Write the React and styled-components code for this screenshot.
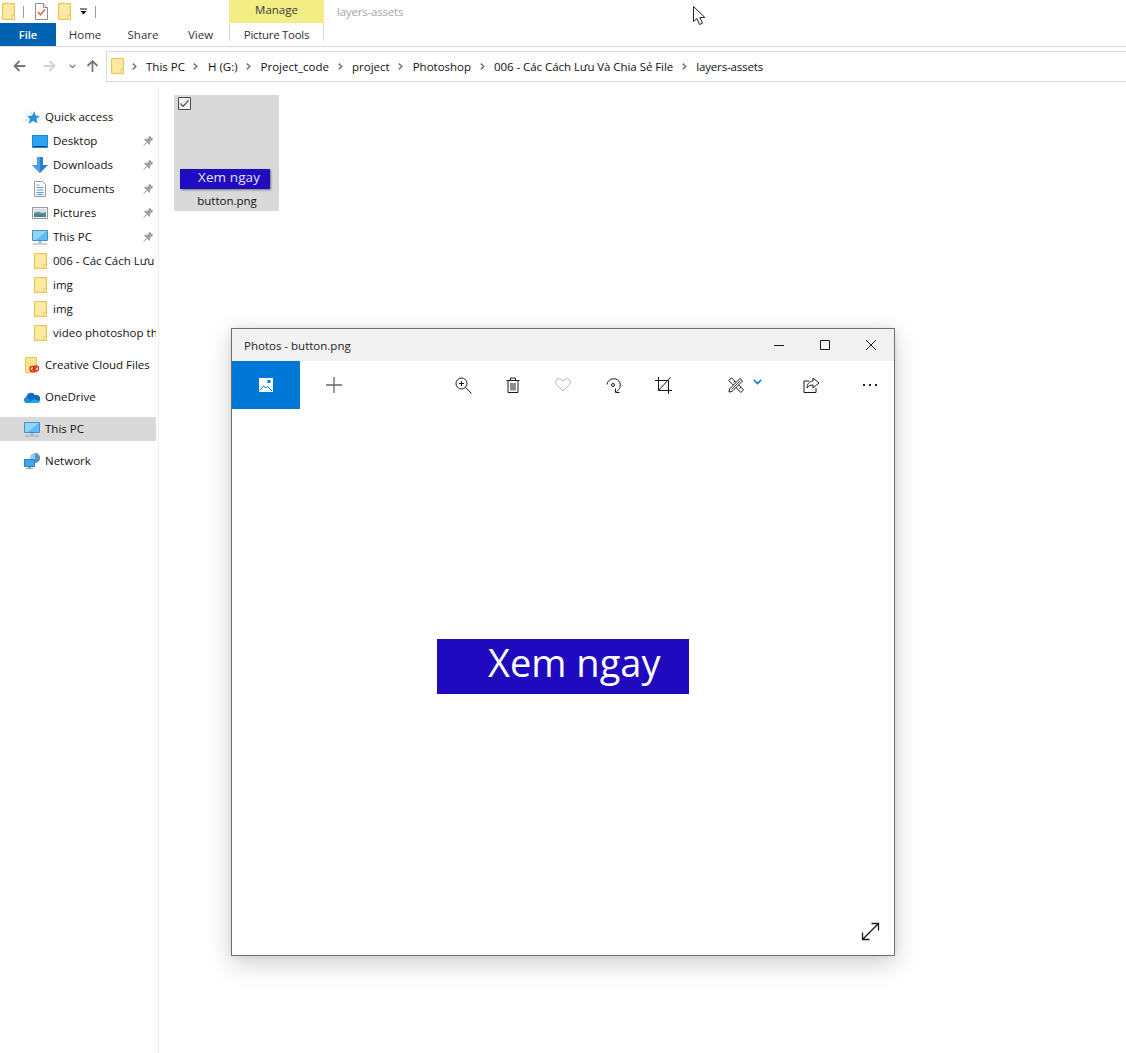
import React from "react";
import styled, { createGlobalStyle } from "styled-components";

const Global = createGlobalStyle`
  html, body { margin: 0; padding: 0; background: #fff; }
  body { font-family: "Open Sans", "Noto Sans", "Liberation Sans", sans-serif; font-size: 11.5px; color: #111; }
  svg { display: block; flex: none; }
`;

const Page = styled.div`
  position: relative; width: 1126px; height: 1053px; overflow: hidden; background: #fff;
  display: flex; flex-direction: column;
`;
const TitleRow = styled.div`display: flex; align-items: flex-start; height: 23px;`;
const Quick = styled.div`display: flex; align-items: center; width: 229px; height: 23px; padding-left: 2px; box-sizing: border-box;`;
const QuickSlot = styled.div`margin-left: ${p => p.$ml || 0}px;`;
const QuickSep = styled.div`width: 1px; height: 12px; background: #9a9a9a; margin-left: ${p => p.$ml}px;`;
const ManageTab = styled.div`
  width: 95px; height: 23px; background: #f2ee85; color: #3a3a3a; text-align: center; line-height: 20px;
`;
const WindowName = styled.div`margin-left: 13px; line-height: 24px; color: #a6a6a6; letter-spacing: -0.2px;`;
const TabRow = styled.div`display: flex; height: 23px; border-bottom: 1px solid #dadada;`;
const FileTab = styled.div`width: 56px; background: #0063b1; color: #fff; text-align: center; line-height: 23px; font-weight: 600; font-size: 11px;`;
const Tab = styled.div`width: ${p => p.$w}px; text-align: center; line-height: 23px; color: #333;`;
const ToolsTab = styled.div`
  width: 95px; height: 18px; box-sizing: border-box; border: 1px solid #d9d9d9; border-width: 0 1px; line-height: 23px;
  text-align: center; color: #333; white-space: nowrap; letter-spacing: -0.3px;
`;
const AddressRow = styled.div`display: flex; align-items: center; height: 38px;`;
const NavButtons = styled.div`display: flex; align-items: center; width: 106px; flex: none;`;
const NavSlot = styled.div`margin-left: ${p => p.$ml}px;`;
const AddressBox = styled.div`
  flex: 1; height: 31px; margin-right: -3px; box-sizing: border-box; border: 1px solid #d9d9d9; display: flex; align-items: center; padding-left: 4px;
`;
const Crumbs = styled.div`display: flex; align-items: center; white-space: nowrap;`;
const Crumb = styled.span`letter-spacing: ${p => p.$track || 0}px;`;
const CrumbSep = styled.div`width: ${p => p.$w || 23}px; display: flex; justify-content: center; padding-right: 1px; box-sizing: border-box;`;
const Body = styled.div`flex: 1; display: flex; min-height: 0;`;
const Nav = styled.nav`
  width: 159px; box-sizing: border-box; border-right: 1px solid #f0f0f0; padding: 20px 2px 0 0; flex: none;
`;
const NavGroup = styled.div`margin-bottom: 8px;`;
const NavRow = styled.div`
  display: flex; align-items: center; height: 24px; position: relative; overflow: hidden; white-space: nowrap;
  background: ${p => p.$selected ? "#d9d9d9" : "transparent"};
`;
const NavIcon = styled.div`
  width: 16px; margin-left: ${p => p.$sub ? 32 : 24}px; margin-right: 5px; display: flex; justify-content: center; flex: none;
`;
const NavLabel = styled.span`padding-bottom: 2px;`;
const Pin = styled.div`position: absolute; right: 2px; top: 6px;`;
const Content = styled.main`flex: 1; padding: 10px 0 0 15px;`;
const Tile = styled.div`position: relative; width: 105px; height: 116px; background: #d9d9d9; padding: 74px 0 0 6px; box-sizing: border-box;`;
const Check = styled.div`position: absolute; left: 4px; top: 2px;`;
const Thumb = styled.div`
  width: 90px; height: 20px; background: #1f0cc0; color: #e4e2ff; box-sizing: border-box; padding-left: 18px;
  font-size: 13.5px; line-height: 16px; box-shadow: 1px 1px 2px rgba(0,0,0,.45); letter-spacing: 0.1px;
`;
const TileLabel = styled.div`margin: 3px 0 0 -6px; text-align: center; line-height: 18px; padding-left: 1px; color: #111;`;

const Win = styled.section`
  position: absolute; left: 231px; top: 328px; width: 664px; height: 628px; box-sizing: border-box;
  border: 1px solid #6e6e6e; background: #fff; display: flex; flex-direction: column;
  box-shadow: 0 8px 24px rgba(0,0,0,.18), 0 0 8px rgba(0,0,0,.08);
`;
const WinTitle = styled.header`height: 32px; background: #f2f2f2; display: flex; align-items: center; padding-left: 12px; color: #222;`;
const WinName = styled.div`flex: 1;`;
const WinCtl = styled.div`width: 46px; height: 32px; display: flex; align-items: center; justify-content: center;`;
const Toolbar = styled.div`height: 48px; display: flex; align-items: center;`;
const Primary = styled.div`width: 68px; height: 48px; background: #0078d7; display: flex; align-items: center; justify-content: center;`;
const ToolBtn = styled.div`
  width: ${p => p.$w || 50}px; height: 48px; margin-left: ${p => p.$ml || 0}px; display: flex; align-items: center; justify-content: center;
`;
const EditBtn = styled.div`
  width: 74px; height: 48px; margin-left: 24px; display: flex; align-items: center; padding-left: 16px; box-sizing: border-box; gap: 9px;
`;
const Chevron = styled.div`margin-top: -6px;`;
const Canvas = styled.div`flex: 1; position: relative; display: flex; align-items: center; justify-content: center; padding-bottom: 31px;`;
const Picture = styled.div`
  width: 252px; height: 55px; background: #1f0abf; color: #fff; box-sizing: border-box; padding-left: 51px;
  font-size: 38px; line-height: 47px; white-space: nowrap;
`;
const Expand = styled.div`position: absolute; right: 14px; bottom: 14px;`;
const Cursor = styled.div`position: absolute; left: 693px; top: 6px;`;

const Folder = ({ w = 13, h = 17 }) => (
  <svg width={w} height={h} viewBox="0 0 13 17" preserveAspectRatio="none">
    <path d="M.5.5h12v16H.5z" fill="#fee58c" stroke="#e8c355" />
    <path d="M2 2h9v13H2z" fill="#ffeaa6" />
    <path d="M10 12h2.500v4.500H10z" fill="#fff3c4" stroke="#e8c355" />
  </svg>
);
const DocCheck = () => (
  <svg width="13" height="17" viewBox="0 0 13 17">
    <path d="M.5.5h8l4 4v12H.5z" fill="#fff" stroke="#8f8f8f" />
    <path d="M8.500.5v4h4" fill="#eee" stroke="#8f8f8f" />
    <path d="M3 9l2.400 2.600L10 6.500" fill="none" stroke="#e4572e" strokeWidth="1.400" />
  </svg>
);
const Dropdown = () => (
  <svg width="7" height="7" viewBox="0 0 7 7">
    <path d="M0 1h7" stroke="#111" /><path d="M.5 3h6L3.500 6.500z" fill="#111" />
  </svg>
);
const Arrow = ({ dir = "left", color = "#777" }) => {
  const rot = { left: 0, right: 180, up: 90 }[dir];
  return (
    <svg width="13" height="12" viewBox="0 0 13 12" style={{ transform: `rotate(${rot}deg)` }}>
      <path d="M12.500 6H1.500M6.500 1L1.500 6l5 5" fill="none" stroke={color} strokeWidth="1.800" />
    </svg>
  );
};
const SmallChevronDown = () => (
  <svg width="7" height="5" viewBox="0 0 7 5"><path d="M.7.8l2.800 2.800L6.300.8" fill="none" stroke="#888" strokeWidth="1.400" /></svg>
);
const CrumbChevron = () => (
  <svg width="5" height="7" viewBox="0 0 5 7"><path d="M.8.6l3 2.900-3 2.900" fill="none" stroke="#777" strokeWidth="1.500" /></svg>
);
const Star = () => (
  <svg width="16" height="13" viewBox="0 0 16 13">
    <path d="M10.500 0l1 4.500 4.500.5-3.500 2.800 1 4.700L9 10l-4.500 3L6 8 3 5.200l5-.7z" fill="#2d8fd8" />
    <path d="M6 .5L8 3M2.500 5H5M1 9h3" stroke="#a9cfea" />
  </svg>
);
const DesktopIcon = () => (
  <svg width="16" height="13" viewBox="0 0 16 13">
    <path d="M0 0h16v13H0z" fill="#0f8ee9" /><path d="M1 1h14v10H1z" fill="#2ea3f2" />
    <path d="M2 11h12v1H2z" fill="#103a63" />
  </svg>
);
const DownloadIcon = () => (
  <svg width="16" height="16" viewBox="0 0 16 16">
    <path d="M5 0h6v8h5l-8 8-8-8h5z" fill="#2f80d2" /><path d="M5 0h3v16L0 8h5z" fill="#4a9de6" />
  </svg>
);
const DocumentsIcon = () => (
  <svg width="12" height="16" viewBox="0 0 12 16">
    <path d="M.5.5h8l3 3v12H.5z" fill="#fff" stroke="#9a9a9a" />
    <path d="M2.500 4h3M2.500 6.500h7M2.500 9h7M2.500 11.500h7M2.500 13.500h7" stroke="#5a9bd0" />
  </svg>
);
const PicturesIcon = () => (
  <svg width="16" height="12" viewBox="0 0 16 12">
    <path d="M.5.5h15v11H.5z" fill="#eef2f5" stroke="#999" />
    <path d="M2 2h12v4H2z" fill="#d3e2ee" /><path d="M2 6l4-1.500L10 6l4-1v2H2z" fill="#6f9a78" /><path d="M2 7h12v3H2z" fill="#4f7fa8" />
  </svg>
);
const PcIcon = () => (
  <svg width="16" height="15" viewBox="0 0 16 15">
    <path d="M.5.5h15v10H.5z" fill="#5dbcf2" stroke="#4a90c4" />
    <path d="M1 1h14L4 10H1z" fill="#8fd3f7" />
    <path d="M6.500 11h3v2h-3z" fill="#a8b8c4" /><path d="M1 14h14" stroke="#8ea3b3" />
  </svg>
);
const CcFolder = () => (
  <svg width="14" height="16" viewBox="0 0 14 16">
    <path d="M.5.5h11v15H.5z" fill="#fee58c" stroke="#e8c355" />
    <circle cx="7.500" cy="12" r="2.600" fill="none" stroke="#d8232a" strokeWidth="1.300" />
    <circle cx="11" cy="11.500" r="2.600" fill="none" stroke="#d8232a" strokeWidth="1.300" />
    <path d="M6 13.500l6-3.500" stroke="#d8232a" />
  </svg>
);
const CloudIcon = () => (
  <svg width="16" height="11" viewBox="0 0 16 11">
    <path d="M3 11a3 3 0 0 1-.6-5.900A4.600 4.600 0 0 1 11 3.200 3.600 3.600 0 0 1 15.800 8 3 3 0 0 1 13 11z" fill="#0f6cbd" />
    <path d="M3 11a3 3 0 0 1-.4-5.900L9 11z" fill="#1490df" /><path d="M5 11l5-4 5.500 2.500c-.5 1-1.400 1.500-2.500 1.500z" fill="#28a8ea" />
  </svg>
);
const NetIcon = () => (
  <svg width="16" height="16" viewBox="0 0 16 16">
    <circle cx="11" cy="5" r="5" fill="#9cc8e8" /><path d="M11 0a5 5 0 0 1 0 10z" fill="#5b92bf" />
    <path d="M.5 6.500h10v7h-10z" fill="#41a5ee" stroke="#2f7fbb" />
    <path d="M4 14h3v1H4zM2 15h7v1H2z" fill="#8ea3b3" />
  </svg>
);
const PinIcon = () => (
  <svg width="11" height="11" viewBox="0 0 11 11">
    <path d="M6.500.5l4 4-1.500.5-2 2 .2 2-1 .8-5-5 .8-1 2 .2 2-2z" fill="#a3a3a3" /><path d="M3.500 7.500L.5 10.500" stroke="#a3a3a3" />
  </svg>
);
const CheckIcon = () => (
  <svg width="13" height="13" viewBox="0 0 13 13">
    <path d="M.5.5h12v12H.5z" fill="#f4f4f4" stroke="#4a4a4a" />
    <path d="M2.500 6.500l2.700 2.800 5.300-6" fill="none" stroke="#4a4a4a" strokeWidth="1.200" />
  </svg>
);
const Line = ({ size = 18, children, sw = 1 }) => (
  <svg width={size} height={size} viewBox={`0 0 ${size} ${size}`} fill="none" stroke="#1a1a1a" strokeWidth={sw}>{children}</svg>
);
const GalleryIcon = () => (
  <svg width="14" height="14" viewBox="0 0 14 14">
    <path d="M0 0h14v14H0z" fill="#fff" />
    <path d="M1 12.500l3.500-4.500L7 10l1.500-1.500 4.500 4.500" fill="none" stroke="#0078d7" />
    <path d="M8.500 2h3v3h-3z" fill="#0078d7" />
  </svg>
);

const navData = [
  [{ t: "Quick access", i: <Star /> },
   { t: "Desktop", i: <DesktopIcon />, sub: 1, pin: 1 },
   { t: "Downloads", i: <DownloadIcon />, sub: 1, pin: 1 },
   { t: "Documents", i: <DocumentsIcon />, sub: 1, pin: 1 },
   { t: "Pictures", i: <PicturesIcon />, sub: 1, pin: 1 },
   { t: "This PC", i: <PcIcon />, sub: 1, pin: 1 },
   { t: "006 - Các Cách Lưu Và Chia Sẻ File", i: <Folder h={16} />, sub: 1 },
   { t: "img", i: <Folder h={16} />, sub: 1 },
   { t: "img", i: <Folder h={16} />, sub: 1 },
   { t: "video photoshop thiết kế", i: <Folder h={16} />, sub: 1 }],
  [{ t: "Creative Cloud Files", i: <CcFolder /> }],
  [{ t: "OneDrive", i: <CloudIcon /> }],
  [{ t: "This PC", i: <PcIcon />, selected: 1 }],
  [{ t: "Network", i: <NetIcon /> }],
];
const crumbs = [
  { t: "This PC" }, { t: "H (G:)" }, { t: "Project_code" }, { t: "project" }, { t: "Photoshop" },
  { t: "006 - Các Cách Lưu Và Chia Sẻ File", track: -0.06 }, { t: "layers-assets", track: -0.15 },
];

export default function App() {
  return (
    <Page>
      <Global />
      <TitleRow>
        <Quick>
          <Folder />
          <QuickSep $ml={8} />
          <QuickSlot $ml={11}><DocCheck /></QuickSlot>
          <QuickSlot $ml={10}><Folder /></QuickSlot>
          <QuickSlot $ml={9}><Dropdown /></QuickSlot>
          <QuickSep $ml={8} />
        </Quick>
        <ManageTab>Manage</ManageTab>
        <WindowName>layers-assets</WindowName>
      </TitleRow>
      <TabRow>
        <FileTab>File</FileTab>
        <Tab $w={58}>Home</Tab>
        <Tab $w={58}>Share</Tab>
        <Tab $w={57}>View</Tab>
        <ToolsTab>Picture Tools</ToolsTab>
      </TabRow>
      <AddressRow>
        <NavButtons>
          <NavSlot $ml={13}><Arrow dir="left" /></NavSlot>
          <NavSlot $ml={17}><Arrow dir="right" color="#d4d4d4" /></NavSlot>
          <NavSlot $ml={13}><SmallChevronDown /></NavSlot>
          <NavSlot $ml={10}><Arrow dir="up" /></NavSlot>
        </NavButtons>
        <AddressBox>
          <Crumbs>
            <Folder h={16} />
            <CrumbSep $w={22}><CrumbChevron /></CrumbSep>
            {crumbs.map((c, i) => (
              <React.Fragment key={c.t}>
                <Crumb $track={c.track}>{c.t}</Crumb>
                {i < crumbs.length - 1 && <CrumbSep><CrumbChevron /></CrumbSep>}
              </React.Fragment>
            ))}
          </Crumbs>
        </AddressBox>
      </AddressRow>
      <Body>
        <Nav>
          {navData.map((group, g) => (
            <NavGroup key={g}>
              {group.map((r, k) => (
                <NavRow key={k} $selected={r.selected}>
                  <NavIcon $sub={r.sub}>{r.i}</NavIcon>
                  <NavLabel>{r.t}</NavLabel>
                  {r.pin && <Pin><PinIcon /></Pin>}
                </NavRow>
              ))}
            </NavGroup>
          ))}
        </Nav>
        <Content>
          <Tile>
            <Check><CheckIcon /></Check>
            <Thumb>Xem ngay</Thumb>
            <TileLabel>button.png</TileLabel>
          </Tile>
        </Content>
      </Body>

      <Win>
        <WinTitle>
          <WinName>Photos - button.png</WinName>
          <WinCtl><Line size={10}><path d="M0 5.500h10" /></Line></WinCtl>
          <WinCtl><Line size={10}><path d="M.5.500h9v9h-9z" /></Line></WinCtl>
          <WinCtl><Line size={10}><path d="M0 0l10 10M10 0L0 10" /></Line></WinCtl>
        </WinTitle>
        <Toolbar>
          <Primary><GalleryIcon /></Primary>
          <ToolBtn $w={68}>
            <svg width="16" height="16" viewBox="0 0 16 16"><path d="M8 0v16M0 8h16" stroke="#666" strokeWidth="1.300" /></svg>
          </ToolBtn>
          <ToolBtn $ml={70}>
            <Line size={17}><circle cx="6.500" cy="6.500" r="5.500" /><path d="M10.500 10.500l6 6M6.500 4v5M4 6.500h5" /></Line>
          </ToolBtn>
          <ToolBtn>
            <Line size={16}><path d="M1.500 3.500h13M5.500 3V1h5v2M3 4v11.500h10V4M6 6v7.500M8 6v7.500M10 6v7.500" /></Line>
          </ToolBtn>
          <ToolBtn>
            <svg width="16" height="14" viewBox="0 0 16 14"><path d="M8 13L1.700 6.700a3.500 3.500 0 0 1 5-5L8 3l1.300-1.300a3.500 3.500 0 0 1 5 5z" fill="none" stroke="#b5b5b5" /></svg>
          </ToolBtn>
          <ToolBtn>
            <Line size={17}><path d="M2 7.500a6.800 6.800 0 0 1 13-1.500c.9 3-.3 6.500-3.500 8.500" /><circle cx="8" cy="8" r="1.500" /><path d="M10.500 11.500v4h4" /></Line>
          </ToolBtn>
          <ToolBtn>
            <Line size={17}><path d="M3.500 0v13.500H17M0 3.500h13.500V17M3.500 13.500l12-13" /></Line>
          </ToolBtn>
          <EditBtn>
            <Line size={16}>
              <path d="M3.500.8l12 12-2.700 2.700-12-12z" />
              <path d="M5.500 5.500l1.500-1.500M8.500 8.500l1.500-1.500M11.500 11.500l1.500-1.500" />
              <path d="M12 1.500L14.500 4 4 14.500l-3 .5.500-3z" fill="#fff" />
              <path d="M12.500 3.500l-9 9" strokeWidth=".8" />
            </Line>
            <Chevron>
              <svg width="9" height="6" viewBox="0 0 9 6"><path d="M.800.800l3.700 3.700L8.200.800" fill="none" stroke="#0078d7" strokeWidth="1.600" /></svg>
            </Chevron>
          </EditBtn>
          <ToolBtn>
            <Line size={17}><path d="M6 4H1v11.500h12V11" /><path d="M10 1l6 5-6 5V8c-3 0-5 1-6 3 0-4 2-6.500 6-7z" /></Line>
          </ToolBtn>
          <ToolBtn $w={48} $ml={10}>
            <svg width="14" height="2" viewBox="0 0 14 2"><path d="M0 0h2v2H0zM6 0h2v2H6zM12 0h2v2h-2z" fill="#222" /></svg>
          </ToolBtn>
        </Toolbar>
        <Canvas>
          <Picture>Xem ngay</Picture>
          <Expand>
            <Line size={19} sw={1.300}><path d="M1.500 17.500l16-16M10.500 1.500h7v7M1.500 10.500v7h7" /></Line>
          </Expand>
        </Canvas>
      </Win>

      <Cursor>
        <svg width="14" height="20" viewBox="0 0 14 20">
          <path d="M.500.500v15l3.500-3 2.500 6 3-1.300-2.600-5.700h5z" fill="#fff" stroke="#222" />
        </svg>
      </Cursor>
    </Page>
  );
}
